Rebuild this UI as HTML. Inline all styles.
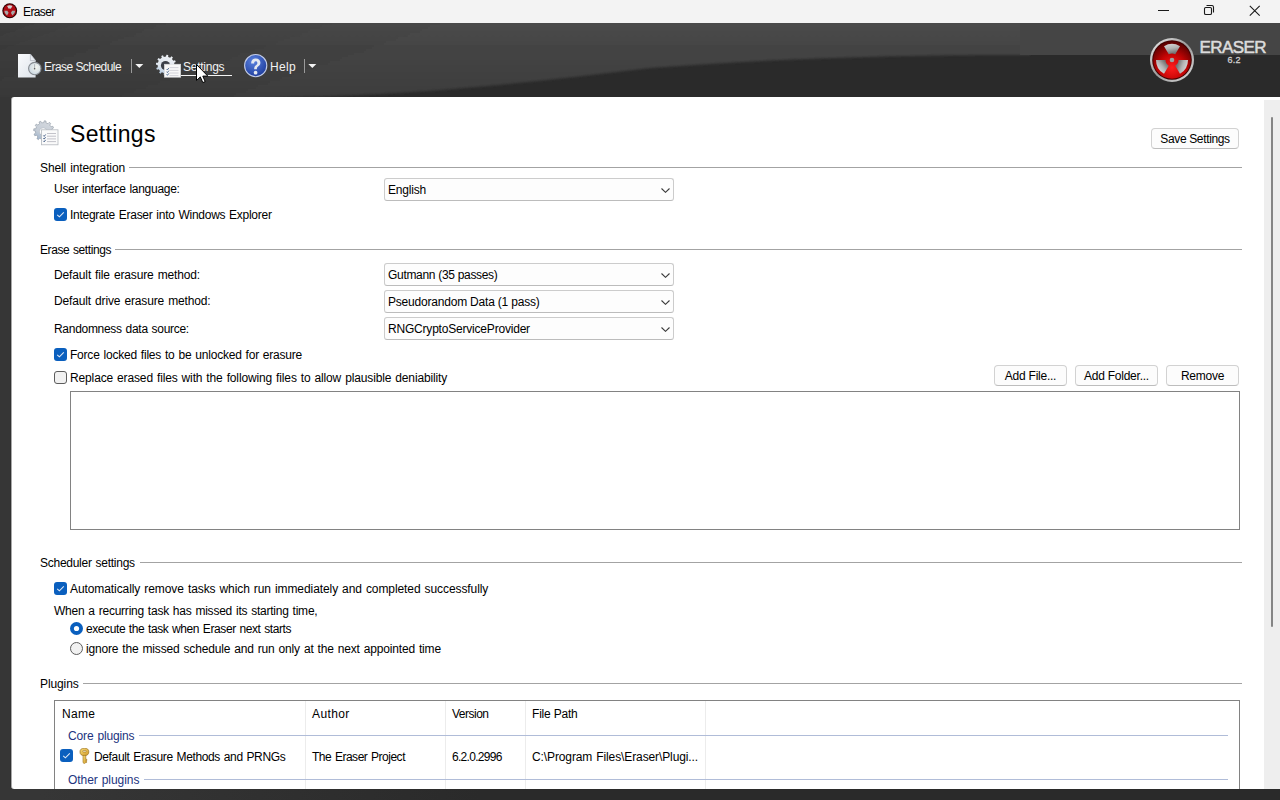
<!DOCTYPE html>
<html><head><meta charset="utf-8">
<style>
*{margin:0;padding:0;box-sizing:border-box}
html,body{width:1280px;height:800px;overflow:hidden;background:linear-gradient(90deg,#363636 0px,#363636 40px,#2a2a2a 480px,#2a2a2a 1280px);font-family:"Liberation Sans",sans-serif;font-size:12px;color:#000}
.a{position:absolute}
.t{position:absolute;white-space:nowrap;line-height:15px;font-size:12px;letter-spacing:-0.2px;color:#000}
#title{left:0;top:0;width:1280px;height:23px;background:#f3f3f3}
#hdr{left:0;top:23px;width:1280px;height:74px;background:#2a2a2a;overflow:hidden}
#panel{left:11px;top:97px;width:1269px;height:692px;background:#fff;border-radius:3px 0 0 3px;border-left:1px solid #a8a8a8}
#pshadow{left:10px;top:99px;width:1px;height:688px;background:#303030}
#sb{left:1264px;top:100px;width:16px;height:689px;background:#eeeeee}
.grp{position:absolute;height:1px;background:#a3a3a3}
.cb{position:absolute;width:290px;height:23px;border:1px solid #cccccc;border-bottom-color:#bcbcbc;border-radius:3px;background:#fdfdfd}
.cb span{position:absolute;left:3px;top:4px;line-height:15px;font-size:12px;white-space:nowrap;color:#000}
.cb svg{position:absolute;left:276px;top:9px}
.chk{position:absolute;width:13px;height:13px;border-radius:3px;background:#0a5fbe}
.chk svg{position:absolute;left:0;top:0}
.unchk{position:absolute;width:13px;height:13px;border-radius:3px;border:1px solid #5c5c5c;background:#f1f1f1}
.btn{position:absolute;border:1px solid #d2d2d2;border-bottom-color:#bdbdbd;border-radius:4px;background:#fcfcfc}
.btn span{position:absolute;left:0;right:0;text-align:center;line-height:15px;font-size:12px;white-space:nowrap;color:#000}
.wt{position:absolute;white-space:nowrap;line-height:15px;font-size:12px;color:#f2f2f2}
.col{position:absolute;top:701px;width:1px;height:88px;background:#ececec}
</style></head><body>
<div id="title" class="a">
  <svg class="a" style="left:2px;top:3.3px" width="15.5" height="15.5" viewBox="0 0 46 46">
    <circle cx="23" cy="23" r="22" fill="#2a0202"/>
    <circle cx="23" cy="23" r="19" fill="#b00c14"/>
    <path d="M15 9.144 A16 16 0 0 1 31 9.144 L26.25 17.371 A6.5 6.5 0 0 0 19.75 17.371 Z" fill="#cfcfcf"/>
    <path d="M15 9.144 A16 16 0 0 1 31 9.144 L26.25 17.371 A6.5 6.5 0 0 0 19.75 17.371 Z" fill="#a8a8a8" transform="rotate(120 23 23)"/>
    <path d="M15 9.144 A16 16 0 0 1 31 9.144 L26.25 17.371 A6.5 6.5 0 0 0 19.75 17.371 Z" fill="#a8a8a8" transform="rotate(240 23 23)"/>
  </svg>
  <div class="t" style="left:23px;top:5px;letter-spacing:-0.6px;color:#000">Eraser</div>
  <div class="a" style="left:1158px;top:10px;width:11px;height:1px;background:#1a1a1a"></div>
  <svg class="a" style="left:1202px;top:3px" width="14" height="14" viewBox="0 0 14 14"><rect x="2.5" y="4.5" width="7" height="7" rx="1.3" fill="none" stroke="#1a1a1a" stroke-width="1.1"/><path d="M4.5 2.5 H10 A1.8 1.8 0 0 1 11.5 4 V9.5" fill="none" stroke="#1a1a1a" stroke-width="1.1"/></svg>
  <svg class="a" style="left:1249px;top:4.5px" width="12" height="12" viewBox="0 0 12 12"><path d="M0.8 0.8 L10.7 10.7 M10.7 0.8 L0.8 10.7" stroke="#1a1a1a" stroke-width="1.1"/></svg>
</div>
<div id="hdr" class="a">
  <svg class="a" style="left:0;top:0" width="1280" height="74" viewBox="0 0 1280 74">
    <defs>
      <linearGradient id="hg" x1="0" y1="0" x2="1" y2="0.25">
        <stop offset="0" stop-color="#363636"/><stop offset="0.15" stop-color="#3e3e3e"/><stop offset="0.5" stop-color="#454545"/><stop offset="1" stop-color="#454545"/>
      </linearGradient>
      <linearGradient id="hv" gradientUnits="userSpaceOnUse" x1="0" y1="0" x2="0" y2="74">
        <stop offset="0" stop-color="#fff" stop-opacity="0.03"/><stop offset="0.45" stop-color="#000" stop-opacity="0.03"/><stop offset="1" stop-color="#000" stop-opacity="0.12"/>
      </linearGradient>
      <filter id="bl" x="-0.1" y="-0.5" width="1.2" height="2"><feGaussianBlur stdDeviation="0.9"/></filter>
    </defs>
    <path d="M-10 -10 H1030 V32 L1020 32 C900 32 780 35 650 45 C540 58 430 72 290 74 L200 80 H-10 Z" fill="url(#hg)" filter="url(#bl)"/>
    <path d="M-10 -10 H1030 V32 L1020 32 C900 32 780 35 650 45 C540 58 430 72 290 74 L200 80 H-10 Z" fill="url(#hv)" filter="url(#bl)"/>
    <rect x="1020" y="0" width="260" height="32" fill="#454545"/>
  </svg>
  <svg class="a" style="left:17px;top:30px" width="26" height="26" viewBox="0 0 26 26">
    <defs><linearGradient id="pg" x1="0" y1="0" x2="1" y2="1"><stop offset="0" stop-color="#fafbfd"/><stop offset="1" stop-color="#dde3ea"/></linearGradient>
    <radialGradient id="cg" cx="0.6" cy="0.4" r="0.7"><stop offset="0" stop-color="#f4f6f0"/><stop offset="1" stop-color="#c6d4e0"/></radialGradient></defs>
    <path d="M1 1 H13.4 L18.6 7.6 V24.6 H1 Z" fill="url(#pg)"/>
    <path d="M13.4 1 V7.6 H18.6 Z" fill="#e8ecf2" stroke="#a8adb6" stroke-width="0.6"/>
    <circle cx="17.8" cy="15.6" r="6.2" fill="url(#cg)" stroke="#858a90" stroke-width="1.1"/>
    <path d="M17.6 11.2 V15.8" stroke="#9aa0a8" stroke-width="0.7" fill="none"/>
    <circle cx="17.6" cy="15.8" r="0.8" fill="#555"/>
  </svg>
  <div class="wt" style="left:44px;top:37px;letter-spacing:-0.55px">Erase Schedule</div>
  <div class="a" style="left:131px;top:36px;width:1px;height:14px;background:#9a9a9a"></div>
  <svg class="a" style="left:135px;top:40px" width="9" height="5" viewBox="0 0 9 5"><path d="M0.3 1 H8.3 L4.3 5 Z" fill="#f4f4f4"/></svg>
  <svg class="a" style="left:156px;top:30px" width="27" height="25" viewBox="0 0 27 25">
    <defs><linearGradient id="gg" x1="0.7" y1="0" x2="0.2" y2="1"><stop offset="0" stop-color="#eef1f5"/><stop offset="0.6" stop-color="#dfe6ee"/><stop offset="1" stop-color="#a9c3de"/></linearGradient></defs>
    <g transform="translate(10 12)">
      <path d="M0.00 -8.40 L0.40 -10.19 L2.25 -9.95 L2.17 -8.11 L4.20 -7.27 L5.44 -8.63 L6.92 -7.49 L5.94 -5.94 L7.27 -4.20 L9.03 -4.75 L9.74 -3.02 L8.11 -2.17 L8.40 -0.00 L10.19 0.40 L9.95 2.25 L8.11 2.17 L7.27 4.20 L8.63 5.44 L7.49 6.92 L5.94 5.94 L4.20 7.27 L4.75 9.03 L3.02 9.74 L2.17 8.11 L0.00 8.40 L-0.40 10.19 L-2.25 9.95 L-2.17 8.11 L-4.20 7.27 L-5.44 8.63 L-6.92 7.49 L-5.94 5.94 L-7.27 4.20 L-9.03 4.75 L-9.74 3.02 L-8.11 2.17 L-8.40 0.00 L-10.19 -0.40 L-9.95 -2.25 L-8.11 -2.17 L-7.27 -4.20 L-8.63 -5.44 L-7.49 -6.92 L-5.94 -5.94 L-4.20 -7.27 L-4.75 -9.03 L-3.02 -9.74 L-2.17 -8.11 Z" fill="url(#gg)"/>
      <circle cx="-0.5" cy="0.5" r="4.6" fill="#3c4048"/>
    </g>
    <rect x="8.3" y="11.2" width="16.4" height="13" fill="#f8f8f8" stroke="#d8dadc" stroke-width="0.6"/>
    <path d="M13.5 14.6 H22.5 M13.5 17.4 H22.5 M13.5 20 H22.5 M13.5 22.6 H22.5" stroke="#cfcfd6" stroke-width="0.9"/>
    <path d="M10.6 16 L11.4 16.9 L12.8 15 M10.6 18.7 L11.4 19.6 L12.8 17.7 M10.6 21.4 L11.4 22.3 L12.8 20.4" stroke="#40608a" stroke-width="0.9" fill="none"/>
  </svg>
  <div class="wt" style="left:183px;top:37px;letter-spacing:-0.25px">Settings</div>
  <div class="a" style="left:181px;top:52px;width:51px;height:1px;background:#f4f4f4"></div>
  <svg class="a" style="left:243px;top:30px" width="26" height="25" viewBox="0 0 26 25">
    <defs><radialGradient id="hb" cx="0.4" cy="0.3" r="0.75"><stop offset="0" stop-color="#5a82e0"/><stop offset="1" stop-color="#1c3a9a"/></radialGradient></defs>
    <circle cx="12.7" cy="12.6" r="11.1" fill="url(#hb)" stroke="#c2cce6" stroke-width="1.1"/>
    <g transform="translate(12.7 13.2) scale(1.1) translate(-12.7 -11.5)"><path d="M8.6 9 C8.6 5.8 10.7 4.6 12.8 4.6 C15.3 4.6 17 6.1 17 8.4 C17 10.4 15.6 11.2 14.6 12 C13.9 12.6 13.8 13.1 13.8 14.2 H11.3 C11.3 12.4 11.8 11.5 12.9 10.6 C13.8 9.9 14.2 9.5 14.2 8.6 C14.2 7.7 13.6 7.1 12.7 7.1 C11.8 7.1 11.3 7.8 11.3 9 Z" fill="#e4e8f0"/>
    <circle cx="12.6" cy="17.4" r="1.7" fill="#e4e8f0"/></g>
  </svg>
  <div class="wt" style="left:270px;top:37px;letter-spacing:0.3px">Help</div>
  <div class="a" style="left:304px;top:36px;width:1px;height:14px;background:#9a9a9a"></div>
  <svg class="a" style="left:308px;top:40px" width="9" height="5" viewBox="0 0 9 5"><path d="M0.3 1 H8.3 L4.3 5 Z" fill="#f4f4f4"/></svg>
  <svg class="a" style="left:196px;top:41px" width="13" height="20" viewBox="0 0 13 20">
    <path d="M0.5 0.5 V16.5 L4.3 12.9 L6.8 18.6 L9.2 17.6 L6.8 12.1 L11.8 12.1 Z" fill="#fff" stroke="#000" stroke-width="1"/>
  </svg>
  <svg class="a" style="left:1149px;top:14px" width="46" height="46" viewBox="0 0 46 46">
    <defs>
      <radialGradient id="lr" cx="0.5" cy="0.7" r="0.72"><stop offset="0" stop-color="#ff1c1c"/><stop offset="0.5" stop-color="#c00404"/><stop offset="1" stop-color="#4a0000"/></radialGradient>
      <linearGradient id="ls" x1="0" y1="0" x2="1" y2="1"><stop offset="0" stop-color="#f0f0f0"/><stop offset="0.5" stop-color="#9a9a9a"/><stop offset="1" stop-color="#e0e0e0"/></linearGradient>
      <linearGradient id="lb" x1="0" y1="0" x2="0.3" y2="1"><stop offset="0" stop-color="#d8d8d8"/><stop offset="0.5" stop-color="#b4b4b4"/><stop offset="1" stop-color="#707070"/></linearGradient>
    </defs>
    <circle cx="23" cy="23" r="22" fill="url(#ls)"/>
    <circle cx="23" cy="23" r="19.8" fill="#400000"/>
    <circle cx="23" cy="23" r="18.8" fill="url(#lr)"/>
    <path d="M15 9.144 A16 16 0 0 1 31 9.144 L26.25 17.371 A6.5 6.5 0 0 0 19.75 17.371 Z" fill="url(#lb)"/>
    <path d="M15 9.144 A16 16 0 0 1 31 9.144 L26.25 17.371 A6.5 6.5 0 0 0 19.75 17.371 Z" fill="url(#lb)" transform="rotate(120 23 23)"/>
    <path d="M15 9.144 A16 16 0 0 1 31 9.144 L26.25 17.371 A6.5 6.5 0 0 0 19.75 17.371 Z" fill="url(#lb)" transform="rotate(240 23 23)"/>
    <circle cx="23" cy="23" r="2.3" fill="#a0a0a0"/>
  </svg>
  <div class="a" style="left:1199.5px;top:15.4px;font-weight:normal;-webkit-text-stroke:0.55px #dcdcdc;font-size:17px;line-height:20px;color:#dcdcdc;letter-spacing:-0.6px;white-space:nowrap">ERASER</div>
  <div class="a" style="left:1227.5px;top:32px;font-weight:normal;-webkit-text-stroke:0.3px #cfcfcf;font-size:9px;line-height:10px;color:#cfcfcf;letter-spacing:0.2px;white-space:nowrap">6.2</div>
</div>
<div id="pshadow" class="a"></div><div id="panel" class="a"></div>
<div id="sb" class="a"><div class="a" style="left:7px;top:17px;width:2px;height:510px;background:#858585;border-radius:1px"></div></div>
<svg class="a" style="left:33px;top:120px" width="27" height="26" viewBox="0 0 27 26">
  <defs><linearGradient id="gg2" x1="0.7" y1="0" x2="0.2" y2="1"><stop offset="0" stop-color="#d4d8de"/><stop offset="0.6" stop-color="#c4ccd6"/><stop offset="1" stop-color="#98b0cc"/></linearGradient></defs>
  <g transform="translate(10.8 11)">
    <path d="M0.00 -8.40 L0.40 -10.19 L2.25 -9.95 L2.17 -8.11 L4.20 -7.27 L5.44 -8.63 L6.92 -7.49 L5.94 -5.94 L7.27 -4.20 L9.03 -4.75 L9.74 -3.02 L8.11 -2.17 L8.40 -0.00 L10.19 0.40 L9.95 2.25 L8.11 2.17 L7.27 4.20 L8.63 5.44 L7.49 6.92 L5.94 5.94 L4.20 7.27 L4.75 9.03 L3.02 9.74 L2.17 8.11 L0.00 8.40 L-0.40 10.19 L-2.25 9.95 L-2.17 8.11 L-4.20 7.27 L-5.44 8.63 L-6.92 7.49 L-5.94 5.94 L-7.27 4.20 L-9.03 4.75 L-9.74 3.02 L-8.11 2.17 L-8.40 0.00 L-10.19 -0.40 L-9.95 -2.25 L-8.11 -2.17 L-7.27 -4.20 L-8.63 -5.44 L-7.49 -6.92 L-5.94 -5.94 L-4.20 -7.27 L-4.75 -9.03 L-3.02 -9.74 L-2.17 -8.11 Z" fill="url(#gg2)" stroke="#8e98a4" stroke-width="0.6"/>
    <circle cx="-0.6" cy="0.6" r="3.8" fill="#ffffff" stroke="#9aa4b0" stroke-width="0.5"/>
  </g>
  <rect x="8.5" y="9.8" width="16.5" height="15" fill="#fafafa" stroke="#b4b8be" stroke-width="0.8"/>
  <path d="M14 13.5 H23 M14 16.2 H23 M14 18.9 H23 M14 21.6 H23" stroke="#bcbcc4" stroke-width="0.9"/>
  <path d="M10.4 15.5 L11.2 16.4 L12.6 14.5 M10.4 18.2 L11.2 19.1 L12.6 17.2 M10.4 20.9 L11.2 21.8 L12.6 19.9" stroke="#34507c" stroke-width="0.9" fill="none"/>
</svg>
<div class="t" style="left:70px;top:120px;letter-spacing:0.330px;font-size:23px;line-height:28px">Settings</div>
<div class="btn" style="left:1151px;top:128px;width:88px;height:21px"><span style="top:3px;letter-spacing:-0.35px">Save Settings</span></div>
<div class="t" style="left:40px;top:161px;letter-spacing:-0.106px;word-spacing:0.8px;">Shell integration</div>
<div class="grp" style="left:129px;top:167px;width:1113px"></div>
<div class="t" style="left:54px;top:182px;letter-spacing:-0.279px;word-spacing:0.8px;">User interface language:</div>
<div class="cb" style="left:384px;top:178px"><span style="letter-spacing:-0.2px">English</span><svg width="9" height="5" viewBox="0 0 9 5"><path d="M0.5 0.5 L4.5 4.3 L8.5 0.5" fill="none" stroke="#3a3a3a" stroke-width="1.1"/></svg></div>
<div class="chk" style="left:54px;top:208px"><svg width="13" height="13" viewBox="0 0 13 13"><path d="M3.2 6.8 L5.4 8.8 L9.8 4.4" fill="none" stroke="#dfe8f5" stroke-width="1.1"/></svg></div>
<div class="t" style="left:70px;top:208px;letter-spacing:-0.272px;word-spacing:0.8px;">Integrate Eraser into Windows Explorer</div>
<div class="t" style="left:40px;top:243px;letter-spacing:-0.415px;word-spacing:0.8px;">Erase settings</div>
<div class="grp" style="left:115px;top:249px;width:1127px"></div>
<div class="t" style="left:54px;top:268px;letter-spacing:-0.134px;word-spacing:0.8px;">Default file erasure method:</div>
<div class="cb" style="left:384px;top:263px"><span style="letter-spacing:-0.31px">Gutmann (35 passes)</span><svg width="9" height="5" viewBox="0 0 9 5"><path d="M0.5 0.5 L4.5 4.3 L8.5 0.5" fill="none" stroke="#3a3a3a" stroke-width="1.1"/></svg></div>
<div class="t" style="left:54px;top:294px;letter-spacing:-0.136px;word-spacing:0.8px;">Default drive erasure method:</div>
<div class="cb" style="left:384px;top:290px"><span style="letter-spacing:-0.2px">Pseudorandom Data (1 pass)</span><svg width="9" height="5" viewBox="0 0 9 5"><path d="M0.5 0.5 L4.5 4.3 L8.5 0.5" fill="none" stroke="#3a3a3a" stroke-width="1.1"/></svg></div>
<div class="t" style="left:54px;top:322px;letter-spacing:-0.295px;word-spacing:0.8px;">Randomness data source:</div>
<div class="cb" style="left:384px;top:317px"><span style="letter-spacing:-0.2px">RNGCryptoServiceProvider</span><svg width="9" height="5" viewBox="0 0 9 5"><path d="M0.5 0.5 L4.5 4.3 L8.5 0.5" fill="none" stroke="#3a3a3a" stroke-width="1.1"/></svg></div>
<div class="chk" style="left:54px;top:348px"><svg width="13" height="13" viewBox="0 0 13 13"><path d="M3.2 6.8 L5.4 8.8 L9.8 4.4" fill="none" stroke="#dfe8f5" stroke-width="1.1"/></svg></div>
<div class="t" style="left:70px;top:348px;letter-spacing:-0.216px;word-spacing:0.8px;">Force locked files to be unlocked for erasure</div>
<div class="unchk" style="left:54px;top:371px"></div>
<div class="t" style="left:70px;top:371px;letter-spacing:-0.137px;word-spacing:0.8px;">Replace erased files with the following files to allow plausible deniability</div>
<div class="btn" style="left:994px;top:365px;width:73px;height:21px"><span style="top:3px;letter-spacing:-0.25px">Add File...</span></div>
<div class="btn" style="left:1075px;top:365px;width:83px;height:21px"><span style="top:3px;letter-spacing:-0.25px">Add Folder...</span></div>
<div class="btn" style="left:1166px;top:365px;width:73px;height:21px"><span style="top:3px;letter-spacing:-0.25px">Remove</span></div>
<div class="a" style="left:70px;top:391px;width:1170px;height:139px;border:1px solid #828282;background:#fff"></div>
<div class="t" style="left:40px;top:556px;letter-spacing:-0.264px;word-spacing:0.8px;">Scheduler settings</div>
<div class="grp" style="left:140px;top:562px;width:1102px"></div>
<div class="chk" style="left:54px;top:582px"><svg width="13" height="13" viewBox="0 0 13 13"><path d="M3.2 6.8 L5.4 8.8 L9.8 4.4" fill="none" stroke="#dfe8f5" stroke-width="1.1"/></svg></div>
<div class="t" style="left:70px;top:582px;letter-spacing:-0.084px;word-spacing:0.8px;">Automatically remove tasks which run immediately and completed successfully</div>
<div class="t" style="left:54px;top:604px;letter-spacing:-0.230px;word-spacing:0.8px;">When a recurring task has missed its starting time,</div>
<svg class="a" style="left:70px;top:622px" width="13" height="13" viewBox="0 0 13 13"><circle cx="6.5" cy="6.5" r="6.5" fill="#0a5fbe"/><circle cx="6.5" cy="6.5" r="2.6" fill="#fff"/></svg>
<div class="t" style="left:86px;top:622px;letter-spacing:-0.413px;word-spacing:0.8px;">execute the task when Eraser next starts</div>
<svg class="a" style="left:70px;top:642px" width="13" height="13" viewBox="0 0 13 13"><circle cx="6.5" cy="6.5" r="6" fill="#f1f1f1" stroke="#5c5c5c" stroke-width="1"/></svg>
<div class="t" style="left:86px;top:642px;letter-spacing:-0.163px;word-spacing:0.8px;">ignore the missed schedule and run only at the next appointed time</div>
<div class="t" style="left:40px;top:677px;letter-spacing:-0.100px;">Plugins</div>
<div class="grp" style="left:83px;top:683px;width:1159px"></div>
<div class="a" style="left:54px;top:700px;width:1186px;height:89px;border:1px solid #828282;border-bottom:none;background:#fff"></div>
<div class="col" style="left:305px"></div>
<div class="col" style="left:445px"></div>
<div class="col" style="left:525px"></div>
<div class="col" style="left:705px"></div>
<div class="t" style="left:62px;top:707px;letter-spacing:0.300px;">Name</div>
<div class="t" style="left:312px;top:707px;letter-spacing:0.400px;">Author</div>
<div class="t" style="left:452px;top:707px;letter-spacing:-0.500px;">Version</div>
<div class="t" style="left:532px;top:707px;letter-spacing:-0.200px;">File Path</div>
<div class="t" style="left:68px;top:729px;letter-spacing:-0.146px;word-spacing:0.8px;color:#22337e">Core plugins</div>
<div class="a" style="left:139px;top:735px;width:1089px;height:1px;background:#b0bcd8"></div>
<div class="chk" style="left:60px;top:749px"><svg width="13" height="13" viewBox="0 0 13 13"><path d="M3.2 6.8 L5.4 8.8 L9.8 4.4" fill="none" stroke="#dfe8f5" stroke-width="1.1"/></svg></div>
<svg class="a" style="left:79px;top:748px" width="11" height="16" viewBox="0 0 11 16">
  <defs><linearGradient id="kg" x1="0" y1="0" x2="1" y2="1"><stop offset="0" stop-color="#f8dc78"/><stop offset="1" stop-color="#d09a28"/></linearGradient></defs>
  <ellipse cx="5.4" cy="3.9" rx="4.4" ry="3.7" fill="url(#kg)" stroke="#9a6e18" stroke-width="0.7"/>
  <rect x="3.8" y="2.6" width="3.4" height="1.4" rx="0.6" fill="#fff8d8" stroke="#8a6010" stroke-width="0.5"/>
  <path d="M4 7.4 H6.8 V11.3 H7.8 V12.5 H6.8 V13.3 H7.6 V14.5 H6.8 L5.4 15.8 L4 14.6 Z" fill="url(#kg)" stroke="#9a6e18" stroke-width="0.6"/>
</svg>
<div class="t" style="left:94px;top:750px;letter-spacing:-0.363px;word-spacing:0.8px;">Default Erasure Methods and PRNGs</div>
<div class="t" style="left:312px;top:750px;letter-spacing:-0.481px;word-spacing:0.8px;">The Eraser Project</div>
<div class="t" style="left:452px;top:750px;letter-spacing:-0.700px;">6.2.0.2996</div>
<div class="t" style="left:532px;top:750px;letter-spacing:-0.110px;word-spacing:0.8px;">C:\Program Files\Eraser\Plugi...</div>
<div class="t" style="left:68px;top:773px;letter-spacing:-0.066px;word-spacing:0.8px;color:#22337e">Other plugins</div>
<div class="a" style="left:144px;top:779px;width:1084px;height:1px;background:#b0bcd8"></div>
</body></html>
